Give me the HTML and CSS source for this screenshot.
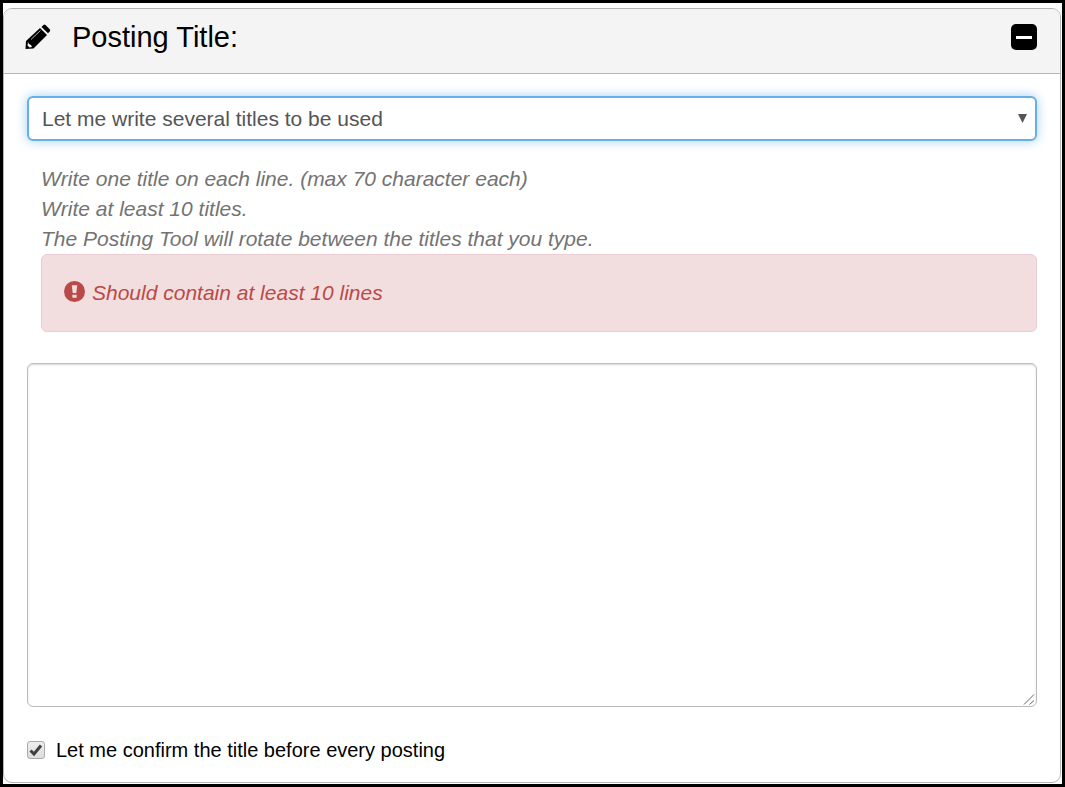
FILE: index.html
```html
<!DOCTYPE html>
<html lang="en">
<head>
<meta charset="utf-8">
<meta name="viewport" content="width=device-width, initial-scale=1">
<title>Posting Title</title>
<link rel="stylesheet" href="styles.css">
</head>
<body>
<main class="frame">
  <section class="panel">
    <header class="panel-header">
      <svg class="pencil" viewBox="0 0 26 26" aria-hidden="true">
        <path d="M.5 25 1 17 15 4 22 11 8.500 24.500Z"/>
        <path d="M16.500 3 18.500 1Q19.500 .2 20.500 1L25 5.500Q25.600 6.300 24.800 7.200L23 9.200Z"/>
        <path class="pencil-shine" d="M6 15.500 15.500 6.500"/>
        <path class="pencil-tip" d="M3 18 4 20 6 21 7 23 4.500 23.500 2.500 21.500Z"/>
      </svg>
      <h1 class="panel-title">Posting Title:</h1>
      <button class="collapse" type="button" aria-label="Collapse"><span class="collapse-bar"></span></button>
    </header>
    <form class="panel-body">
      <div class="select-wrap">
        <select class="control title-mode" aria-label="Title mode">
          <option>Let me write several titles to be used</option>
        </select>
        <svg class="caret" viewBox="0 0 9 9" aria-hidden="true"><path d="M0 0H9L4.500 9Z"/></svg>
      </div>
      <div class="help">
        <p class="help-line">Write one title on each line. (max 70 character each)</p>
        <p class="help-line">Write at least 10 titles.</p>
        <p class="help-line">The Posting Tool will rotate between the titles that you type.</p>
        <div class="alert" role="alert">
          <svg class="alert-icon" viewBox="0 0 20 20" aria-hidden="true">
            <circle cx="10" cy="10" r="10"/>
            <path class="alert-mark" d="M7.400 4H12.600L11.700 11.500H8.300ZM8 13H12V16H8Z"/>
          </svg>
          <span>Should contain at least 10 lines</span>
        </div>
      </div>
      <div class="text-wrap">
        <textarea class="control titles" aria-label="Titles"></textarea>
        <svg class="grip" viewBox="0 0 12 12" aria-hidden="true"><path d="M1 11.500 11 1.500M6.500 11.500 11 7.500"/></svg>
      </div>
      <label class="confirm">
        <input class="confirm-box" type="checkbox" checked>
        <svg class="confirm-tick" viewBox="0 0 18 18" aria-hidden="true"><path d="M3.500 9.500 7 13 14 4.500"/></svg>
        <span>Let me confirm the title before every posting</span>
      </label>
    </form>
  </section>
</main>
</body>
</html>
```
FILE: styles.css
```css
* {
  box-sizing: border-box;
}

body {
  margin: 0;
  background: #fff;
  font-family: "Liberation Sans", Arial, sans-serif;
}

.frame {
  display: flex;
  min-height: 100vh;
  padding: 5px 1px 1px 0;
  border: 3px solid #000;
}

.panel {
  display: flex;
  flex: 1;
  flex-direction: column;
  border: 1px solid #b5b5b5;
  border-radius: 9px;
  overflow: hidden;
}

.panel-header {
  display: flex;
  align-items: center;
  padding: 10px 23px 18px 21px;
  background: #f4f4f4;
  border-bottom: 1px solid #b5b5b5;
}

.pencil {
  width: 26px;
  height: 26px;
}

.pencil-shine {
  fill: none;
  stroke: #b0b0b0;
}

.pencil-tip {
  fill: #f4f4f4;
}

.panel-title {
  flex: 1;
  margin: 0 0 0 21px;
  font-size: 29px;
  font-weight: 400;
  line-height: 36px;
}

.collapse {
  display: flex;
  align-items: center;
  justify-content: center;
  width: 26px;
  height: 26px;
  padding: 0;
  background: #000;
  border: 0;
  border-radius: 5px;
}

.collapse-bar {
  width: 16px;
  height: 3px;
  background: #fff;
}

.panel-body {
  display: flex;
  flex: 1;
  flex-direction: column;
  padding: 22px 23px 17px;
}

.select-wrap,
.text-wrap {
  position: relative;
  display: flex;
}

.control {
  flex: 1;
  margin: 0;
  background: #fff;
  border: 1px solid #bbb;
  border-radius: 6px;
  color: #555;
  font: 21px "Liberation Sans", Arial, sans-serif;
  outline: 0;
}

.title-mode {
  height: 45px;
  padding: 0 30px 0 13px;
  appearance: none;
  border: 2px solid #66afe9;
  box-shadow: 0 0 11px rgba(102, 175, 233, .6);
}

.caret {
  position: absolute;
  top: 18px;
  right: 10px;
  width: 9px;
  height: 9px;
  fill: #555;
  pointer-events: none;
}

.help {
  padding: 23px 0 31px 14px;
  color: #737373;
  font-size: 21px;
  font-style: italic;
  line-height: 30px;
}

.help-line {
  margin: 0;
}

.alert {
  display: flex;
  align-items: center;
  gap: 7px;
  padding: 23px 22px;
  background: #f2dede;
  border: 1px solid #ebccd1;
  border-radius: 6px;
  color: #b94a48;
}

.alert-icon {
  width: 21px;
  height: 21px;
  margin-bottom: 4px;
  fill: #b94a48;
}

.alert-icon .alert-mark {
  fill: #f2dede;
}

.text-wrap {
  flex: 1;
}

.titles {
  padding: 9px 15px;
  resize: none;
  box-shadow: inset 0 1px 2px rgba(0, 0, 0, .15);
}

.grip {
  position: absolute;
  right: 2px;
  bottom: 2px;
  width: 12px;
  height: 12px;
  fill: none;
  stroke: #666;
  pointer-events: none;
}

.confirm {
  position: relative;
  display: flex;
  align-items: center;
  gap: 11px;
  margin-top: 28px;
  font-size: 20px;
  line-height: 30px;
}

.confirm-box {
  width: 18px;
  height: 18px;
  margin: 0;
  appearance: none;
  background: linear-gradient(#eee, #ddd);
  border: 1px solid #aaa;
  border-radius: 3px;
}

.confirm-tick {
  position: absolute;
  left: 0;
  width: 18px;
  height: 18px;
  fill: none;
  stroke: #404040;
  stroke-width: 3;
  pointer-events: none;
  visibility: hidden;
}

.confirm-box:checked + .confirm-tick {
  visibility: visible;
}
```
